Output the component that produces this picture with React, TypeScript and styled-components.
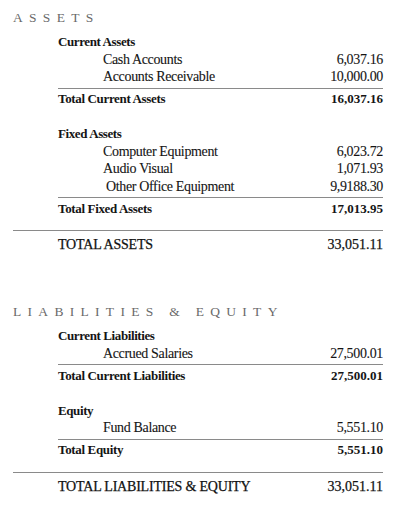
import React from "react";
import styled, { createGlobalStyle } from "styled-components";

const Global = createGlobalStyle`
  html, body { margin: 0; padding: 0; background: #ffffff; }
  body { font-family: "Liberation Serif", "Times New Roman", serif; color: #151515; }
`;

const Page = styled.div`
  width: 400px;
  box-sizing: border-box;
  padding: 9px 17px 0 13px;
`;

const Section = styled.section<{ $top?: number }>`
  margin-top: ${(p) => p.$top ?? 0}px;
`;

const SectionTitle = styled.h2`
  margin: 0 0 6.5px 0;
  font-family: "Liberation Serif", "Times New Roman", serif;
  font-weight: normal;
  font-size: 13.5px;
  line-height: 17.5px;
  letter-spacing: 6.3px;
  color: #6a6a6a;
`;

const Group = styled.div`
  margin-left: 45px;
  & + & { margin-top: 17.5px; }
`;

const GroupTitle = styled.div`
  font-weight: bold;
  font-size: 13px;
  letter-spacing: -0.4px;
  line-height: 17.5px;
  height: 17.5px;
`;

const Items = styled.div`
  padding-bottom: 2px;
  border-bottom: 1px solid #8a8a8a;
`;

const Row = styled.div`
  display: flex;
  justify-content: space-between;
  align-items: baseline;
  height: 17.5px;
  line-height: 17.5px;
  font-size: 14px;
  letter-spacing: -0.35px;
  -webkit-text-stroke: 0.1px #151515;
`;

const ItemLabel = styled.span<{ $shift?: number }>`
  padding-left: ${(p) => 45 + (p.$shift ?? 0)}px;
`;

const Amount = styled.span<{ $spacing?: number }>`
  text-align: right;
  ${(p) => (p.$spacing !== undefined ? `letter-spacing: ${p.$spacing}px;` : "")}
`;

const TotalRow = styled(Row)`
  padding-top: 1.5px;
  font-weight: bold;
  font-size: 13px;
  letter-spacing: -0.35px;
  -webkit-text-stroke: 0;
`;

const GrandTotal = styled.div`
  margin-top: 13px;
  border-top: 1px solid #8a8a8a;
  padding-top: 5px;
`;

const GrandRow = styled(Row)`
  padding-left: 45px;
  font-size: 14px;
  letter-spacing: -0.2px;
  -webkit-text-stroke: 0.25px #111;
  color: #111;
`;

type Item = { label: string; amount: string; shift?: number };
type GroupData = { title: string; items: Item[]; totalLabel: string; total: string };

const assets: GroupData[] = [
  {
    title: "Current Assets",
    items: [
      { label: "Cash Accounts", amount: "6,037.16" },
      { label: "Accounts Receivable", amount: "10,000.00" },
    ],
    totalLabel: "Total Current Assets",
    total: "16,037.16",
  },
  {
    title: "Fixed Assets",
    items: [
      { label: "Computer Equipment", amount: "6,023.72" },
      { label: "Audio Visual", amount: "1,071.93" },
      { label: "Other Office Equipment", amount: "9,9188.30", shift: 3 },
    ],
    totalLabel: "Total Fixed Assets",
    total: "17,013.95",
  },
];

const liabilities: GroupData[] = [
  {
    title: "Current Liabilities",
    items: [{ label: "Accrued Salaries", amount: "27,500.01" }],
    totalLabel: "Total Current Liabilities",
    total: "27,500.01",
  },
  {
    title: "Equity",
    items: [{ label: "Fund Balance", amount: "5,551.10" }],
    totalLabel: "Total Equity",
    total: "5,551.10",
  },
];

function GroupBlock({ g }: { g: GroupData }) {
  return (
    <Group>
      <GroupTitle>{g.title}</GroupTitle>
      <Items>
        {g.items.map((it) => (
          <Row key={it.label}>
            <ItemLabel $shift={it.shift}>{it.label}</ItemLabel>
            <Amount>{it.amount}</Amount>
          </Row>
        ))}
      </Items>
      <TotalRow>
        <span>{g.totalLabel}</span>
        <Amount $spacing={0}>{g.total}</Amount>
      </TotalRow>
    </Group>
  );
}

export default function App() {
  return (
    <>
      <Global />
      <Page>
        <Section>
          <SectionTitle>ASSETS</SectionTitle>
          {assets.map((g) => (
            <GroupBlock key={g.title} g={g} />
          ))}
          <GrandTotal>
            <GrandRow>
              <span>TOTAL ASSETS</span>
              <Amount $spacing={0}>33,051.11</Amount>
            </GrandRow>
          </GrandTotal>
        </Section>
        <Section $top={49.5}>
          <SectionTitle>LIABILITIES &amp; EQUITY</SectionTitle>
          {liabilities.map((g) => (
            <GroupBlock key={g.title} g={g} />
          ))}
          <GrandTotal>
            <GrandRow>
              <span>TOTAL LIABILITIES &amp; EQUITY</span>
              <Amount $spacing={0}>33,051.11</Amount>
            </GrandRow>
          </GrandTotal>
        </Section>
      </Page>
    </>
  );
}
